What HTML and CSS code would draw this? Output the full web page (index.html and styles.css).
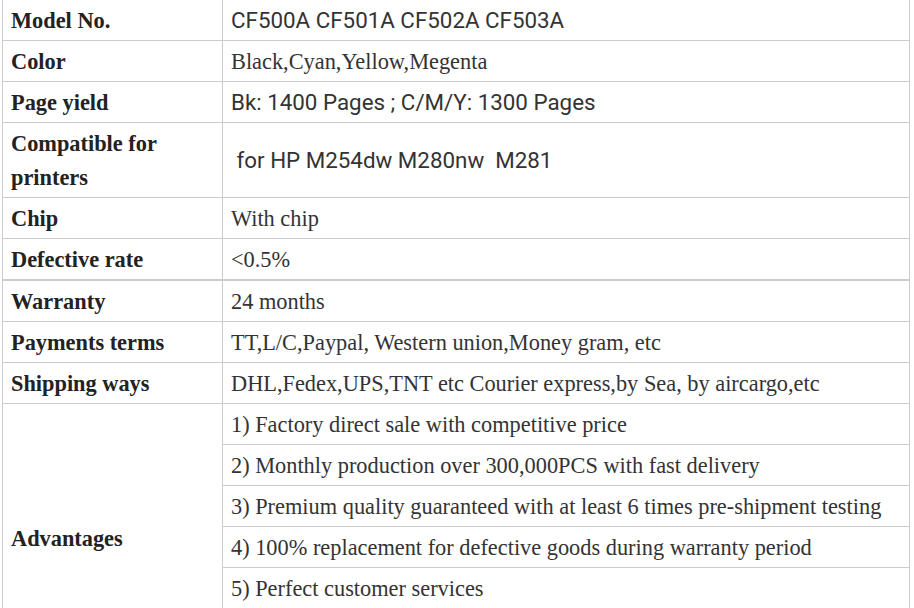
FILE: index.html
```html
<!DOCTYPE html>
<html>
<head>
<meta charset="utf-8">
<link rel="stylesheet" href="styles.css">
</head>
<body>
<div class="sheet">
  <table class="spec">
    <colgroup><col class="col-label"><col></colgroup>
    <tr><td class="label">Model No.</td><td class="sans">CF500A CF501A CF502A CF503A</td></tr>
    <tr><td class="label">Color</td><td>Black,Cyan,Yellow,Megenta</td></tr>
    <tr><td class="label">Page yield</td><td class="sans">Bk: 1400 Pages ; C/M/Y: 1300 Pages</td></tr>
    <tr><td class="label">Compatible for printers</td><td class="sans">&nbsp;for HP M254dw M280nw &nbsp;M281</td></tr>
    <tr><td class="label">Chip</td><td>With chip</td></tr>
    <tr><td class="label">Defective rate</td><td>&lt;0.5%</td></tr>
  </table>
  <table class="spec">
    <colgroup><col class="col-label"><col></colgroup>
    <tr><td class="label">Warranty</td><td>24 months</td></tr>
    <tr><td class="label">Payments terms</td><td>TT,L/C,Paypal, Western union,Money gram, etc</td></tr>
    <tr><td class="label">Shipping ways</td><td>DHL,Fedex,UPS,TNT etc Courier express,by Sea, by aircargo,etc</td></tr>
    <tr><td class="label adv" rowspan="5">Advantages</td><td>1) Factory direct sale with competitive price</td></tr>
    <tr><td>2) Monthly production over 300,000PCS with fast delivery</td></tr>
    <tr><td>3) Premium quality guaranteed with at least 6 times pre-shipment testing</td></tr>
    <tr><td>4) 100% replacement for defective goods during warranty period</td></tr>
    <tr><td>5) Perfect customer services</td></tr>
  </table>
</div>
</body>
</html>
```
FILE: styles.css
```css
html, body {
  margin: 0;
  padding: 0;
  background: #ffffff;
}
.sheet {
  margin: -1px 0 0 2px;
  width: 908px;
}
.spec {
  width: 908px;
  border-collapse: collapse;
  table-layout: fixed;
  font-family: "Liberation Serif", "Times New Roman", serif;
  font-size: 22.35px;
  line-height: 34px;
  color: #333333;
}
.col-label {
  width: 220px;
}
.spec td {
  border: 1px solid #cccccc;
  padding: 4px 8px 2px;
  vertical-align: middle;
  white-space: nowrap;
}
.spec td.label {
  font-weight: bold;
  color: #222222;
  white-space: normal;
}
.spec td.sans {
  font-family: Roboto, "Liberation Sans", Arial, sans-serif;
  padding-top: 3px;
  padding-bottom: 3px;
}
.spec td.adv {
  vertical-align: top;
  padding-top: 118px;
}
```
